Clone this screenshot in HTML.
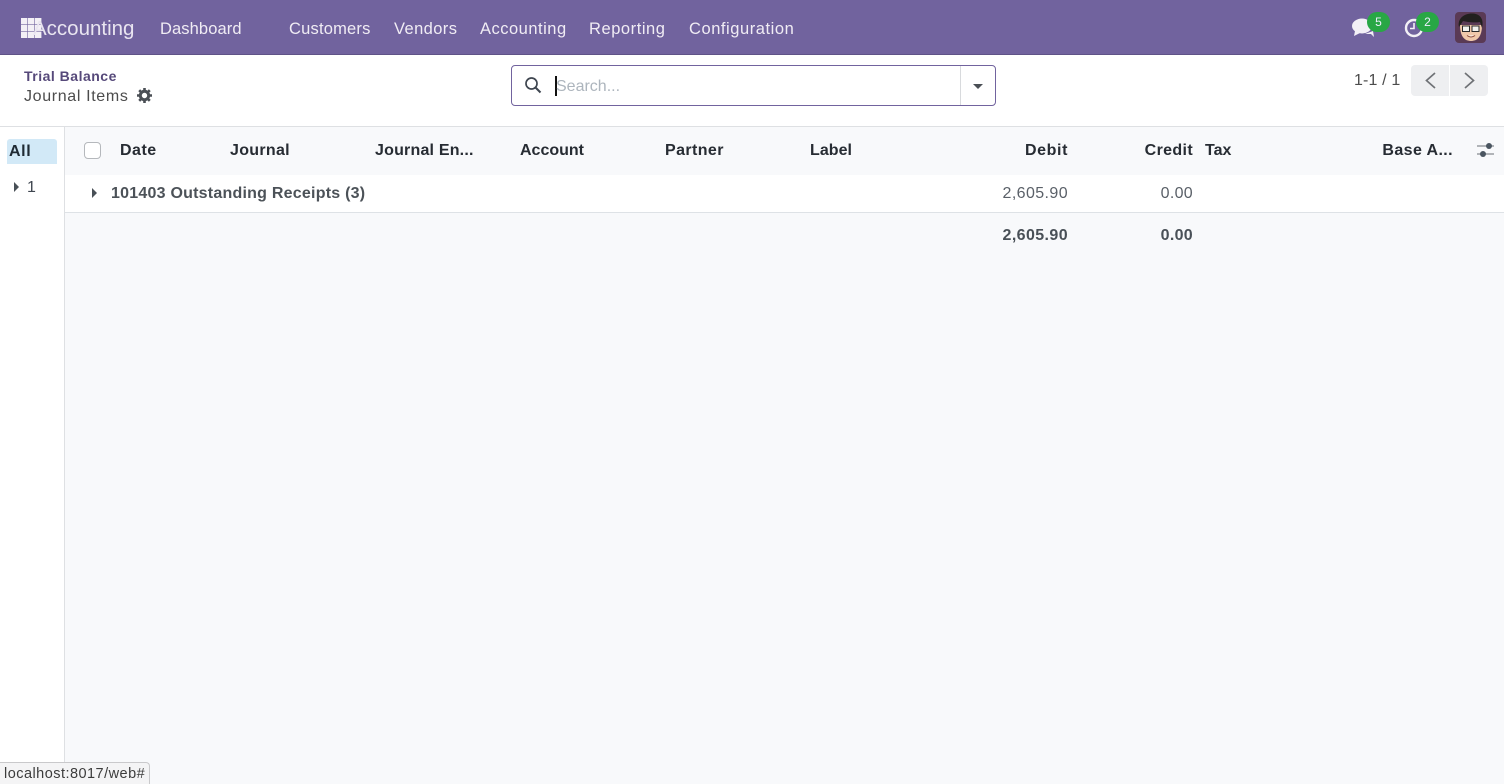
<!DOCTYPE html>
<html><head><meta charset="utf-8"><style>
html,body{margin:0;padding:0;width:1504px;height:784px;overflow:hidden;background:#fff;font-family:"Liberation Sans",sans-serif;color:#4c4c4c}
*{box-sizing:border-box}
.t{position:absolute;white-space:nowrap;line-height:20px;font-size:16px}
.r{text-align:right}
.nav{color:#f0ecf4;top:19px;font-size:16.5px}
.th{top:141px;color:#272c33;font-weight:bold;font-size:16px}
.b{position:absolute}
</style></head><body>
<div class="b" style="left:0;top:0;width:1504px;height:55px;background:#71639e;border-bottom:1px solid #5f5387"></div>
<svg class="b" style="left:21px;top:18px" width="21" height="20"><g fill="#f3f0f6"><rect width="6.400" height="6.400"/><rect x="7" width="6.400" height="6.400"/><rect x="14" width="6.400" height="6.400"/><rect y="7" width="6.400" height="6.400"/><rect x="7" y="7" width="6.400" height="6.400"/><rect x="14" y="7" width="6.400" height="6.400"/><rect y="14" width="6.400" height="6"/><rect x="7" y="14" width="6.400" height="6"/><rect x="14" y="14" width="6.400" height="6"/></g></svg>
<div class="t" style="left:33px;top:18px;font-size:20.5px;line-height:22px;color:#e9e5f0">Accounting</div>
<div class="t nav" style="left:160px;letter-spacing:.1px">Dashboard</div>
<div class="t nav" style="left:289px;letter-spacing:.2px">Customers</div>
<div class="t nav" style="left:394px;letter-spacing:.4px">Vendors</div>
<div class="t nav" style="left:480px;letter-spacing:.5px">Accounting</div>
<div class="t nav" style="left:589px;letter-spacing:.55px">Reporting</div>
<div class="t nav" style="left:689px;letter-spacing:.55px">Configuration</div>
<svg class="b" style="left:1352px;top:18px" width="26" height="20"><ellipse cx="10" cy="8" rx="10" ry="7.500" fill="#f3f0f6"/><path d="M3 13L2 18L8 15Z" fill="#f3f0f6"/><path d="M13 16H19L22 19L21 13Z" fill="#f3f0f6"/></svg>
<div class="b" style="left:1367px;top:12px;width:23px;height:20px;border-radius:10px;background:#28a745;color:#eef;font-size:12px;line-height:20px;text-align:center">5</div>
<svg class="b" style="left:1404px;top:18px" width="20" height="20"><circle cx="10" cy="10" r="8" fill="none" stroke="#f3f0f6" stroke-width="2.400"/><path d="M10 5V10.500H6" fill="none" stroke="#f3f0f6" stroke-width="1.600"/></svg>
<div class="b" style="left:1416px;top:12px;width:23px;height:20px;border-radius:10px;background:#28a745;color:#eef;font-size:12px;line-height:20px;text-align:center">2</div>
<svg class="b" style="left:1455px;top:12px" width="31" height="31"><rect width="31" height="31" rx="4" fill="#5a3a55"/><path d="M5 13C5 25 10 29 16 29C22 29 27 25 27 13Z" fill="#f0c8aa"/><path d="M4 15C2 6 10 1 18 1.500C26 2 29 8 27 16L25 10C19 11 12 10 8 9Z" fill="#22201f"/><rect x="7.500" y="14" width="7" height="5.500" fill="#f2f2ee" stroke="#2a2a2a" stroke-width="1"/><rect x="17" y="14" width="7" height="5.500" fill="#f2f2ee" stroke="#2a2a2a" stroke-width="1"/><path d="M12 23.500Q16 26.500 20 23.500" fill="#fff" stroke="#8a4a3a" stroke-width="1"/></svg>

<div class="t" style="left:24px;top:66px;font-size:14px;font-weight:bold;color:#56497a;letter-spacing:.5px">Trial Balance</div>
<div class="t" style="left:24px;top:87px;font-size:16px;color:#4c4c4c;letter-spacing:.65px">Journal Items</div>
<svg class="b" style="left:137px;top:88px" width="15" height="15" viewBox="0 0 15 15"><circle cx="7.500" cy="7.500" r="4.200" fill="none" stroke="#4a4f55" stroke-width="3"/><g stroke="#4a4f55" stroke-width="2.600"><path d="M7.500 0V3M7.500 12V15M0 7.500H3M12 7.500H15M2.200 2.200L4.300 4.300M10.700 10.700L12.800 12.800M2.200 12.800L4.300 10.700M10.700 4.300L12.800 2.200"/></g></svg>

<div class="b" style="left:511px;top:65px;width:485px;height:41px;border:1px solid #71639e;border-radius:4px;background:#fff"></div>
<div class="b" style="left:960px;top:66px;width:1px;height:39px;background:#d8dadd"></div>
<svg class="b" style="left:524px;top:76px" width="18" height="18"><circle cx="7.500" cy="7.500" r="5.500" fill="none" stroke="#3f4650" stroke-width="1.700"/><path d="M11.500 11.500L16.500 16.500" stroke="#3f4650" stroke-width="2"/></svg>
<div class="b" style="left:555px;top:76px;width:1.500px;height:20px;background:#111"></div>
<div class="t" style="left:556px;top:77px;font-size:16px;color:#adb5bd">Search...</div>
<div class="b" style="left:973px;top:84px;width:0;height:0;border-left:5.500px solid transparent;border-right:5.500px solid transparent;border-top:5.500px solid #4a4f55"></div>

<div class="t" style="left:1354px;top:71px;font-size:16px;color:#4c4c4c;letter-spacing:.15px">1-1 / 1</div>
<div class="b" style="left:1411px;top:65px;width:38px;height:31px;background:#eeeff1;border-radius:4px 0 0 4px"></div>
<div class="b" style="left:1450px;top:65px;width:38px;height:31px;background:#eeeff1;border-radius:0 4px 4px 0"></div>
<svg class="b" style="left:1424px;top:71px" width="13" height="19"><path d="M11 2L2.500 9.500L11 17" fill="none" stroke="#6f7276" stroke-width="1.700"/></svg>
<svg class="b" style="left:1463px;top:71px" width="13" height="19"><path d="M2 2L10.500 9.500L2 17" fill="none" stroke="#6f7276" stroke-width="1.700"/></svg>

<div class="b" style="left:0;top:126px;width:1504px;height:1px;background:#dee0e3"></div>
<div class="b" style="left:64px;top:127px;width:1px;height:657px;background:#dee0e3"></div>
<div class="b" style="left:65px;top:127px;width:1439px;height:657px;background:#f8f9fb"></div>
<div class="b" style="left:7px;top:139px;width:50px;height:25px;background:#d2e9f7;border-radius:3px 3px 0 0"></div>
<div class="t" style="left:9px;top:142px;font-weight:bold;color:#1f2a33;font-size:16px;letter-spacing:.6px">All</div>
<div class="b" style="left:14px;top:182px;width:0;height:0;border-top:5px solid transparent;border-bottom:5px solid transparent;border-left:5px solid #495057"></div>
<div class="t" style="left:27px;top:178px;font-size:16px;color:#3f4650">1</div>

<div class="b" style="left:84px;top:142px;width:17px;height:17px;border:1px solid #b5b8bc;border-radius:4px;background:#fff"></div>
<div class="t th" style="left:120px;letter-spacing:.5px">Date</div>
<div class="t th" style="left:230px;letter-spacing:.3px">Journal</div>
<div class="t th" style="left:375px;letter-spacing:.2px">Journal En...</div>
<div class="t th" style="left:520px">Account</div>
<div class="t th" style="left:665px;letter-spacing:.4px">Partner</div>
<div class="t th" style="left:810px;letter-spacing:.05px">Label</div>
<div class="t th r" style="left:968px;width:100px;letter-spacing:.6px">Debit</div>
<div class="t th r" style="left:1093px;width:100px;letter-spacing:.35px">Credit</div>
<div class="t th" style="left:1205px">Tax</div>
<div class="t th r" style="left:1353px;width:100px;letter-spacing:.4px">Base A...</div>
<svg class="b" style="left:1477px;top:142px" width="18" height="16"><path d="M0 4H17M0 12H17" stroke="#868a90" stroke-width="1.200"/><circle cx="12" cy="4" r="3" fill="#4a5560"/><circle cx="6" cy="12" r="3" fill="#4a5560"/></svg>

<div class="b" style="left:65px;top:175px;width:1439px;height:38px;background:#fff;border-bottom:1px solid #dee2e6"></div>
<div class="b" style="left:92px;top:188px;width:0;height:0;border-top:5px solid transparent;border-bottom:5px solid transparent;border-left:5px solid #495057"></div>
<div class="t" style="left:111px;top:184px;font-weight:bold;color:#4c5258;font-size:16px;letter-spacing:.23px">101403 Outstanding Receipts (3)</div>
<div class="t r" style="left:968px;top:184px;width:100px;color:#5a6068;letter-spacing:.4px">2,605.90</div>
<div class="t r" style="left:1093px;top:184px;width:100px;color:#5a6068;letter-spacing:.3px">0.00</div>
<div class="t r" style="left:968px;top:226px;width:100px;font-weight:bold;color:#495057;letter-spacing:.4px">2,605.90</div>
<div class="t r" style="left:1093px;top:226px;width:100px;font-weight:bold;color:#495057;letter-spacing:.3px">0.00</div>

<div class="b" style="left:0;top:762px;width:150px;height:22px;background:#f4f4f5;border:1px solid #c9c9cb;border-left:0;border-bottom:0;border-radius:0 4px 0 0"></div>
<div class="t" style="left:4px;top:764px;font-size:14.500px;color:#3c3c3c;letter-spacing:.47px">localhost:8017/web#</div>
</body></html>
